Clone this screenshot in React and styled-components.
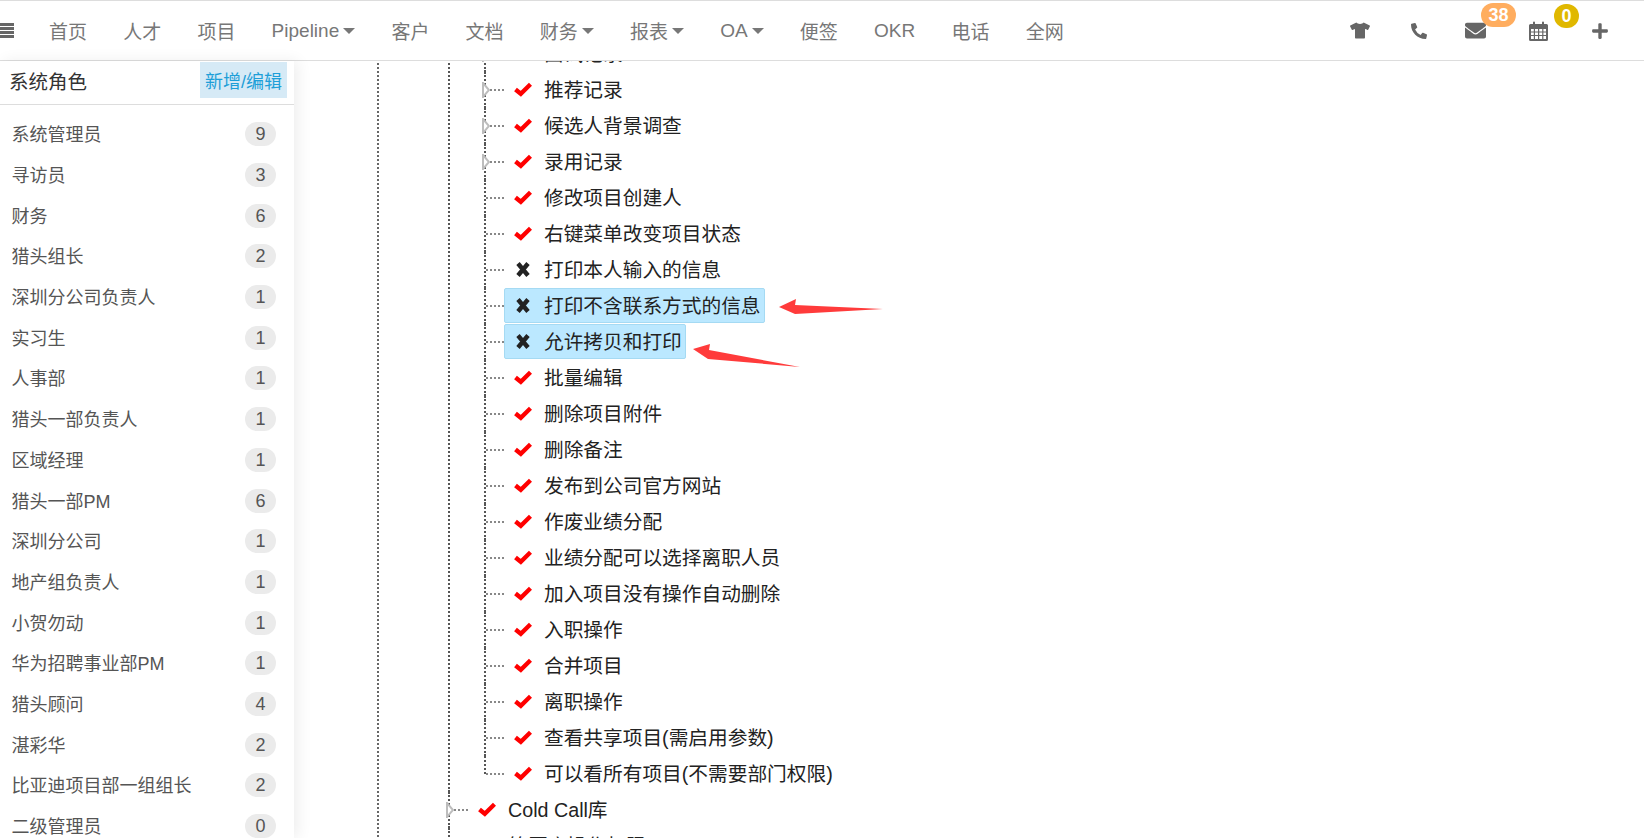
import React from 'react';
import styled, { createGlobalStyle } from 'styled-components';
import { FaPhoneAlt, FaEnvelope, FaPlus, FaTshirt } from 'react-icons/fa';

const GlobalStyle = createGlobalStyle`
  html, body {
    margin: 0;
    padding: 0;
    height: 100%;
    overflow: hidden;
    background: #fff;
    font-family: "Liberation Sans", "Noto Sans CJK SC", sans-serif;
  }
  #root { height: 100%; }
  * { box-sizing: border-box; }
`;

const Page = styled.div`
  position: relative;
  display: flex;
  flex-direction: column;
  height: 838px;
  overflow: hidden;
`;

const Navbar = styled.header`
  flex: none;
  display: flex;
  align-items: center;
  height: 61px;
  padding: 0 36px 0 0;
  background: #fff;
  border-top: 1px solid #ddd;
  border-bottom: 1px solid #ddd;
`;

const Burger = styled.svg`
  flex: none;
  width: 14px;
  height: 15px;
  margin-right: 35px;
  fill: #666;
`;

const NavLinks = styled.nav`
  display: flex;
  align-items: center;
  gap: 36.2px;
`;

const NavLink = styled.a`
  display: flex;
  align-items: center;
  gap: 4px;
  font-size: 19px;
  color: #777;
  white-space: nowrap;
`;

const Caret = styled.span`
  width: 0;
  height: 0;
  border-left: 6.5px solid transparent;
  border-right: 6.5px solid transparent;
  border-top: 6px solid #777;
`;

const NavTools = styled.div`
  display: flex;
  align-items: center;
  margin-left: auto;
`;

const Tool = styled.span`
  position: relative;
  display: flex;
  align-items: center;
  justify-content: center;
  width: ${p => p.$width}px;
  margin-left: ${p => p.$gap || 0}px;
  color: #666;
  font-size: ${p => p.$size}px;
`;

const Badge = styled.span`
  position: absolute;
  top: -17px;
  left: ${p => p.$left}px;
  min-width: ${p => p.$width}px;
  height: 24px;
  border-radius: 12px;
  background: ${p => p.$color};
  color: #fff;
  font-size: 18px;
  font-weight: 700;
  line-height: 24px;
  text-align: center;
`;

const Body = styled.div`
  flex: 1;
  display: flex;
  min-height: 0;
`;

const Sidebar = styled.aside`
  flex: none;
  width: 294px;
  background: #fff;
  box-shadow: 4px 0 14px rgba(0, 0, 0, 0.07);
  z-index: 1;
`;

const SidebarHead = styled.div`
  display: flex;
  align-items: center;
  justify-content: space-between;
  height: 44px;
  padding: 0 7px 5px 9px;
  border-bottom: 1px solid #ddd;
`;

const SidebarTitle = styled.span`
  font-size: 19.5px;
  color: #333;
`;

const EditButton = styled.a`
  display: flex;
  align-items: center;
  justify-content: center;
  width: 87px;
  height: 36px;
  background: #d6eaf6;
  color: #1e9fd8;
  font-size: 18px;
  white-space: nowrap;
`;

const RoleList = styled.ul`
  list-style: none;
  margin: 0;
  padding: 8px 18px 0 11.5px;
`;

const RoleItem = styled.li`
  display: flex;
  align-items: center;
  justify-content: space-between;
  height: 40.7px;
  font-size: 18px;
  color: #555;
`;

const RoleCount = styled.span`
  width: 31px;
  height: 24px;
  margin-top: 2px;
  border-radius: 12px;
  background: #ebebeb;
  color: #555;
  font-size: 18px;
  line-height: 24px;
  text-align: center;
`;

const Main = styled.main`
  flex: 1;
  min-width: 0;
  overflow: hidden;
  padding-left: 83px;
`;

const OuterLevel = styled.div`
  min-height: 100%;
  padding-left: 69px;
  border-left: 2px dotted #666;
`;

const Tree = styled.div`
  margin-top: -25px;
`;

const Group = styled.div`
  padding-left: 34px;
  border-left: 2px dotted #555;
`;

const Row = styled.div`
  display: flex;
  height: 36px;
  font-size: 19.7px;
  color: #222;
`;

const Connector = styled.span`
  position: relative;
  flex: none;
  align-self: flex-start;
  width: 20px;
  height: ${p => (p.$last ? '18px' : '36px')};
  border-left: 2px dotted #555;
`;

const Stub = styled.span`
  display: block;
  height: 1px;
  margin-top: 17px;
  border-top: 2px dotted #888;
`;

const Expander = styled.svg`
  position: absolute;
  left: -4px;
  top: 10px;
  width: 8px;
  height: 16px;
  fill: #fff;
  stroke: #bdbdbd;
  stroke-width: 2;
`;

const Node = styled.span`
  display: flex;
  align-items: center;
  align-self: flex-start;
  height: 35px;
  padding: 0 3px 2px 10px;
  white-space: nowrap;
  border: 1px solid ${p => (p.$selected ? '#a5daf3' : 'transparent')};
  border-radius: 2px;
  background: ${p => (p.$selected ? '#bbe8ff' : 'transparent')};
`;

const Mark = styled.svg`
  flex: none;
  width: 18px;
  height: 15px;
  margin: 1px 12px 0 -1px;
  fill: none;
  stroke: ${p => (p.$on ? '#f00' : '#222')};
  stroke-width: ${p => (p.$on ? 4.4 : 4.4)};
`;

const Arrows = styled.svg`
  position: absolute;
  top: 0;
  left: 0;
  width: 1644px;
  height: 838px;
  fill: #ff3b3b;
  pointer-events: none;
  z-index: 2;
`;

const menu = [
  { label: '首页' }, { label: '人才' }, { label: '项目' }, { label: 'Pipeline', drop: true },
  { label: '客户' }, { label: '文档' }, { label: '财务', drop: true }, { label: '报表', drop: true },
  { label: 'OA', drop: true }, { label: '便签' }, { label: 'OKR' }, { label: '电话' }, { label: '全网' },
];

const roles = [
  ['系统管理员', 9], ['寻访员', 3], ['财务', 6], ['猎头组长', 2], ['深圳分公司负责人', 1], ['实习生', 1],
  ['人事部', 1], ['猎头一部负责人', 1], ['区域经理', 1], ['猎头一部PM', 6], ['深圳分公司', 1], ['地产组负责人', 1],
  ['小贺勿动', 1], ['华为招聘事业部PM', 1], ['猎头顾问', 4], ['湛彩华', 2], ['比亚迪项目部一组组长', 2], ['二级管理员', 0],
];

const perms = [
  { label: '面试记录', on: true, fold: true },
  { label: '推荐记录', on: true, fold: true },
  { label: '候选人背景调查', on: true, fold: true },
  { label: '录用记录', on: true, fold: true },
  { label: '修改项目创建人', on: true },
  { label: '右键菜单改变项目状态', on: true },
  { label: '打印本人输入的信息', on: false },
  { label: '打印不含联系方式的信息', on: false, selected: true },
  { label: '允许拷贝和打印', on: false, selected: true },
  { label: '批量编辑', on: true },
  { label: '删除项目附件', on: true },
  { label: '删除备注', on: true },
  { label: '发布到公司官方网站', on: true },
  { label: '作废业绩分配', on: true },
  { label: '业绩分配可以选择离职人员', on: true },
  { label: '加入项目没有操作自动删除', on: true },
  { label: '入职操作', on: true },
  { label: '合并项目', on: true },
  { label: '离职操作', on: true },
  { label: '查看共享项目(需启用参数)', on: true },
  { label: '可以看所有项目(不需要部门权限)', on: true },
];

const CalendarIcon = () => (
  <svg width="19" height="20" viewBox="0 0 19 20" fill="#666">
    <path fillRule="evenodd" d="M1.5 3H4V1.5a1 1 0 0 1 2 0V3h7V1.5a1 1 0 0 1 2 0V3h2.500A1.500 1.500 0 0 1 19 4.500v14a1.500 1.500 0 0 1-1.500 1.500h-16A1.500 1.500 0 0 1 0 18.500v-14A1.500 1.500 0 0 1 1.500 3zM2 8v2.500h2.800V8zm4 0v2.500h3V8zm4.200 0v2.500h3V8zm4.200 0v2.500H17V8zM2 11.500v2.500h2.800v-2.500zm4 0v2.500h3v-2.500zm4.200 0v2.500h3v-2.500zm4.200 0v2.500H17v-2.500zM2 15v3h2.800v-3zm4 0v3h3v-3zm4.200 0v3h3v-3zm4.200 0v3H17v-3z" />
  </svg>
);

const TreeRow = ({ label, on, fold, selected, last }) => (
  <Row>
    <Connector $last={last}>
      <Stub />
      {fold && (
        <Expander viewBox="0 0 8 16">
          <polygon points="1,1 7,8 1,15" />
        </Expander>
      )}
    </Connector>
    <Node $selected={selected}>
      <Mark $on={on} viewBox="0 0 18 15">
        {on
          ? <polyline points="1.5,7.5 6.8,11.8 16.5,2.200" />
          : <path d="M4 1.500 14 13.500M14 1.500 4 13.500" />}
      </Mark>
      {label}
    </Node>
  </Row>
);

export default function App() {
  return (
    <Page>
      <GlobalStyle />
      <Navbar>
        <Burger viewBox="0 0 14 15">
          <rect y="0" width="14" height="3" />
          <rect y="4" width="14" height="3" />
          <rect y="8" width="14" height="3" />
          <rect y="12" width="14" height="3" />
        </Burger>
        <NavLinks>
          {menu.map(item => (
            <NavLink key={item.label}>
              {item.label}
              {item.drop && <Caret />}
            </NavLink>
          ))}
        </NavLinks>
        <NavTools>
          <Tool $width={20} $size={21}><FaTshirt /></Tool>
          <Tool $width={16} $size={16} $gap={41}><FaPhoneAlt /></Tool>
          <Tool $width={21} $size={21} $gap={38}>
            <FaEnvelope />
            <Badge $left={16} $width={35} $color="#ffad5f">38</Badge>
          </Tool>
          <Tool $width={19} $size={19} $gap={43}>
            <CalendarIcon />
            <Badge $left={25} $width={25} $color="#e0b800">0</Badge>
          </Tool>
          <Tool $width={16} $size={18} $gap={44}><FaPlus /></Tool>
        </NavTools>
      </Navbar>
      <Body>
        <Sidebar>
          <SidebarHead>
            <SidebarTitle>系统角色</SidebarTitle>
            <EditButton>新增/编辑</EditButton>
          </SidebarHead>
          <RoleList>
            {roles.map(([name, count]) => (
              <RoleItem key={name}>
                {name}
                <RoleCount>{count}</RoleCount>
              </RoleItem>
            ))}
          </RoleList>
        </Sidebar>
        <Main>
          <OuterLevel>
            <Tree>
              <Group>
                {perms.map((p, i) => (
                  <TreeRow key={p.label} {...p} last={i === perms.length - 1} />
                ))}
              </Group>
              <TreeRow label="Cold Call库" on fold />
              <TreeRow label="简历库操作权限" on />
            </Tree>
          </OuterLevel>
        </Main>
      </Body>
      <Arrows viewBox="0 0 1644 838">
        <polygon points="779,307 796,299 795,305 883,309 795,314" />
        <polygon points="693,349 710,344 709,350 800,367 708,359" />
      </Arrows>
    </Page>
  );
}
